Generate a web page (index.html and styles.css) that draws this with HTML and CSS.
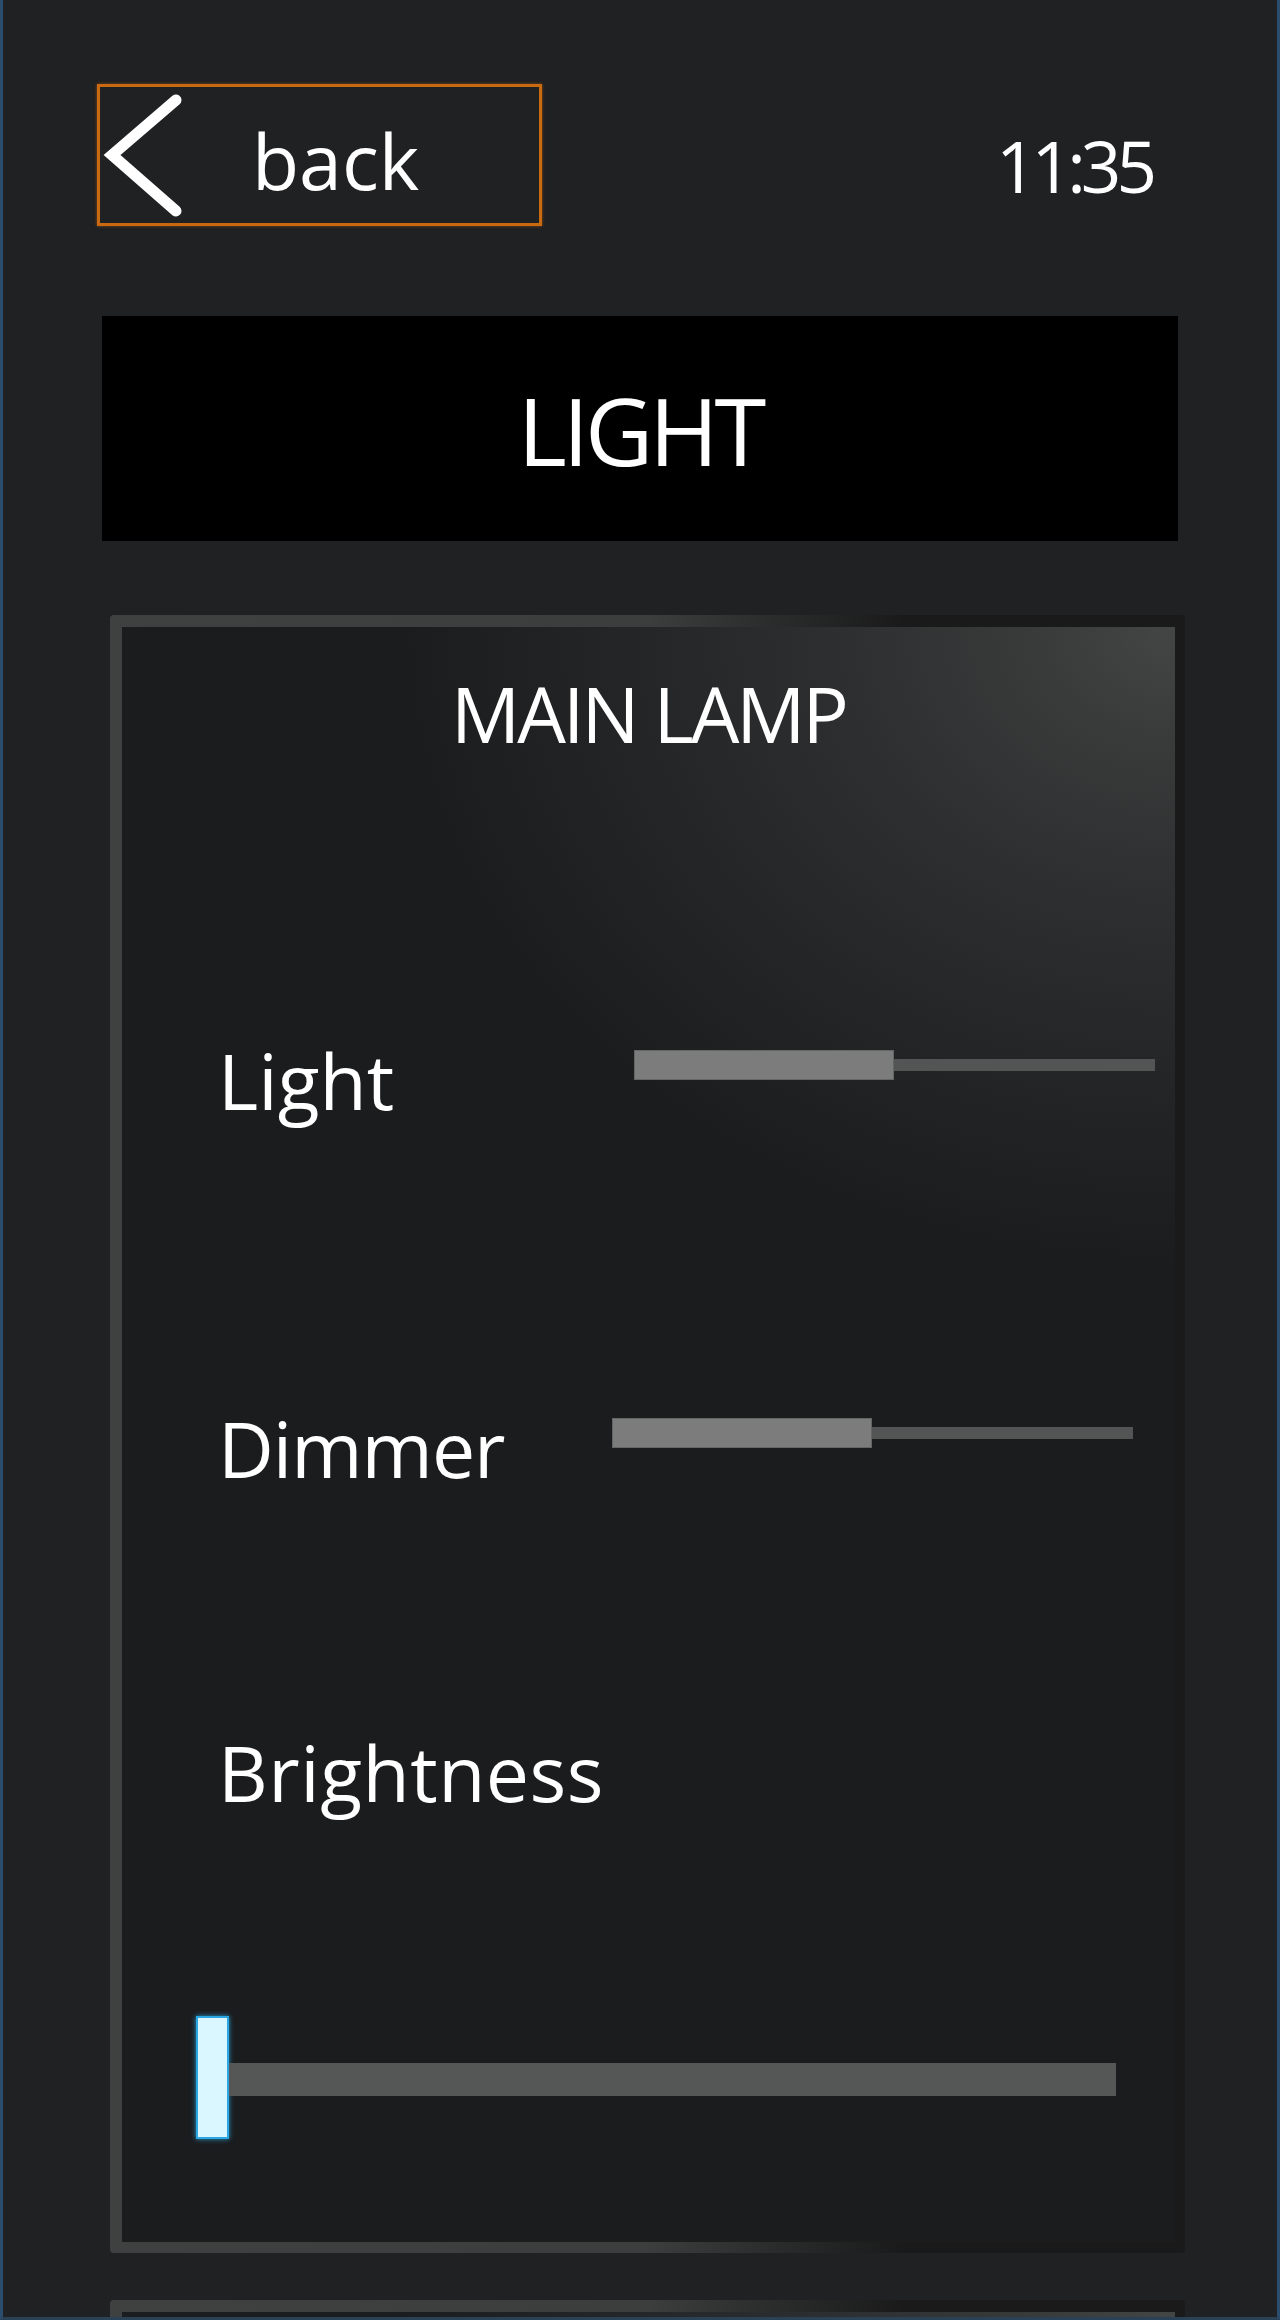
FILE: index.html
```html
<!DOCTYPE html>
<html lang="en">
<head>
<meta charset="utf-8">
<title>Light</title>
<link rel="stylesheet" href="styles.css">
</head>
<body>
<div class="screen">
  <header class="topbar">
    <div class="back-btn">
      <svg class="chevron" width="90" height="136" viewBox="0 0 90 136">
        <path d="M76 13 L12 68 L76 124" fill="none" stroke="#ffffff" stroke-width="11" stroke-linecap="round" stroke-linejoin="miter"/>
      </svg>
      <span class="back-label">back</span>
    </div>
    <div class="clock">11:35</div>
  </header>

  <div class="title"><span>LIGHT</span></div>

  <section class="panel">
    <div class="panel-body">
      <h2 class="panel-title">MAIN LAMP</h2>

      <div class="row row-light">
        <span class="label">Light</span>
        <div class="slider">
          <div class="slider-fill"></div>
          <div class="slider-track"></div>
        </div>
      </div>

      <div class="row row-dimmer">
        <span class="label">Dimmer</span>
        <div class="slider slider-shift">
          <div class="slider-fill"></div>
          <div class="slider-track"></div>
        </div>
      </div>

      <div class="row row-brightness">
        <span class="label">Brightness</span>
      </div>

      <div class="range">
        <div class="range-thumb"></div>
        <div class="range-track"></div>
      </div>
    </div>
  </section>

  <section class="panel panel-next">
    <div class="panel-body"></div>
  </section>
</div>
</body>
</html>
```

FILE: styles.css
```css
html, body {
  margin: 0;
  padding: 0;
  background: #202123;
}

body {
  font-family: "Open Sans", "Noto Sans", "DejaVu Sans", sans-serif;
  color: #ffffff;
}

.screen {
  width: 1280px;
  height: 2320px;
  box-sizing: border-box;
  border-left: 3px solid #2a4d6e;
  border-right: 3px solid #2a4d6e;
  border-bottom: 3px solid #2a4256;
  background: #202123;
  overflow: hidden;
}

/* ---------- top bar ---------- */
.topbar {
  display: flex;
  align-items: flex-start;
  padding: 84px 125px 0 94px;
}

.back-btn {
  width: 445px;
  height: 142px;
  box-sizing: border-box;
  border: 3px solid #c96a10;
  box-shadow: 0 0 3px rgba(201, 106, 16, 0.55);
  display: flex;
  align-items: flex-start;
}

.chevron {
  display: block;
  flex: none;
}

.back-label {
  margin-left: 62px;
  margin-top: 35px;
  font-size: 77px;
  line-height: 77px;
}

.clock {
  margin-left: auto;
  margin-top: 46px;
  font-size: 71px;
  line-height: 71px;
  letter-spacing: -5px;
}

/* ---------- title ---------- */
.title {
  margin: 90px 0 0 99px;
  width: 1076px;
  height: 225px;
  box-sizing: border-box;
  padding-top: 67px;
  background: #000000;
  text-align: center;
  font-size: 94px;
  line-height: 94px;
  letter-spacing: -4px;
}

/* ---------- panel ---------- */
.panel {
  margin: 74px 0 0 107px;
  width: 1075px;
  height: 1638px;
  box-sizing: border-box;
  padding: 12px 10px 11px 12px;
  border-radius: 4px;
  background: linear-gradient(to right, #3f4040 0%, #3c3d3d 50%, #2a2b2b 62%, #1a1a1b 74%, #1a1a1b 100%);
}

.panel-body {
  height: 100%;
  background:
    radial-gradient(ellipse 780px 640px at 100% 0%, #444545 0%, #393a3a 18%, #2e2f30 42%, #252628 68%, rgba(27, 28, 30, 0) 100%),
    #1b1c1e;
}

.panel-title {
  margin: 0;
  padding-top: 48px;
  font-weight: 400;
  font-size: 77px;
  line-height: 77px;
  text-align: center;
  letter-spacing: -3px;
}

.row {
  display: flex;
  align-items: flex-start;
  padding-left: 96px;
}

.row-light {
  margin-top: 290px;
}

.row-dimmer {
  margin-top: 291px;
}

.row-brightness {
  margin-top: 247px;
}

.label {
  flex: none;
  width: 416px;
  font-size: 77px;
  line-height: 77px;
}

.row-dimmer .label {
  letter-spacing: -1px;
}

.row-brightness .label {
  letter-spacing: 0.5px;
}

.slider {
  margin-top: 8px;
  width: 521px;
  height: 30px;
  display: flex;
  align-items: center;
}

.slider-shift {
  margin-left: -22px;
}

.slider-fill {
  width: 260px;
  height: 30px;
  flex: none;
  background: #7b7c7b;
  box-shadow: inset 0 0 0 1px #646565;
}

.slider-track {
  flex: 1;
  height: 12px;
  background: #535454;
}

/* ---------- brightness range ---------- */
.range {
  margin: 205px 0 0 74px;
  width: 920px;
  height: 123px;
  display: flex;
  align-items: center;
}

.range-thumb {
  flex: none;
  width: 33px;
  height: 123px;
  box-sizing: border-box;
  background: #daf6fe;
  border: 2px solid #2aa7e2;
  box-shadow: 0 0 5px rgba(42, 167, 226, 0.9);
}

.range-track {
  width: 887px;
  height: 33px;
  margin-top: 4px;
  background: #555656;
}

/* ---------- next panel (cut off) ---------- */
.panel-next {
  margin-top: 47px;
  height: 400px;
}
```
